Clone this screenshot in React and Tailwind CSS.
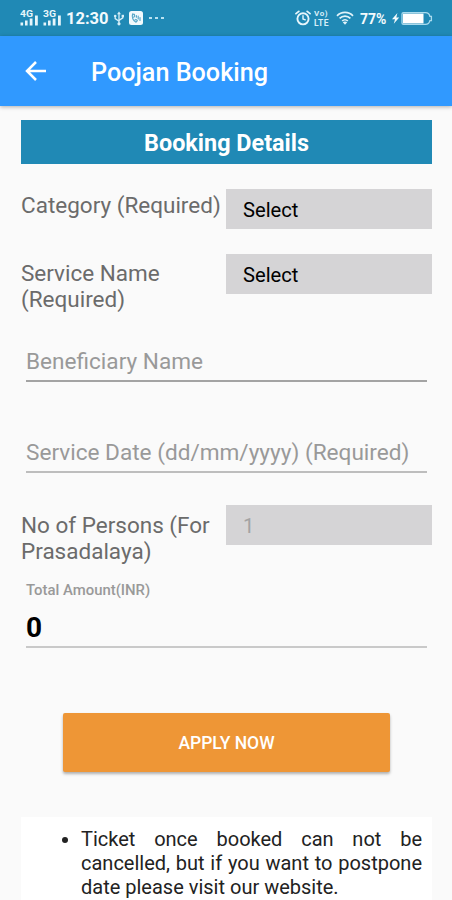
import React, { useState } from "react";

const SignalIcon = ({ label }) => (
  <svg width="20" height="18" viewBox="0 0 20 18" fill="#e6f5fb">
    <text
      x="0"
      y="8"
      fontSize="9.5"
      fontWeight="700"
      fontFamily="Roboto, sans-serif"
      textLength="13"
      lengthAdjust="spacingAndGlyphs"
    >
      {label}
    </text>
    <rect x="0.5" y="13.5" width="2.6" height="3" />
    <rect x="5" y="11.5" width="2.6" height="5" />
    <rect x="9.7" y="9.5" width="2.8" height="7" />
    <rect x="15" y="6.5" width="2.8" height="10" />
  </svg>
);

const UsbIcon = () => (
  <svg width="12" height="15" viewBox="0 0 12 15" fill="none" stroke="#d5eef8" strokeWidth="1.3">
    <path d="M6 2.5V12" />
    <path d="M2.2 5.5V7.6L6 10.2" />
    <path d="M9.8 5.5V6.8L6 9.4" />
    <path d="M6 0.4L8 3.2H4Z" fill="#d5eef8" stroke="none" />
    <circle cx="2.2" cy="5" r="1.3" fill="#d5eef8" stroke="none" />
    <rect x="8.6" y="3.8" width="2.4" height="2.4" fill="#d5eef8" stroke="none" />
    <circle cx="6" cy="12.8" r="1.6" fill="#d5eef8" stroke="none" />
  </svg>
);

const CallAppIcon = () => (
  <svg width="14" height="14" viewBox="0 0 14 14">
    <rect width="14" height="14" rx="2.5" fill="#f2fafd" />
    <g fill="none" stroke="#5ba9c9" strokeWidth="1.2" strokeLinecap="round" strokeLinejoin="round">
      <path d="M3.6 3.2C2.6 6 4 9.6 7 11.2L8.4 9.6L6.9 8.4L6 9" />
      <path d="M3.6 3.2L5.4 3.4L5.6 5.4L4.6 6.2" />
      <path d="M7.4 6.2V4.6M9.2 8V5.2M11 9.4V6.6" />
    </g>
  </svg>
);

const AlarmIcon = () => (
  <svg width="16" height="16" viewBox="0 0 16 16" fill="none" stroke="#e6f5fb" strokeLinecap="round">
    <circle cx="8" cy="8.8" r="5.6" strokeWidth="1.9" />
    <path d="M1 3.6L3.8 1.4M15 3.6L12.2 1.4" strokeWidth="1.8" />
    <path d="M8 5.8V9L10.3 9.8" strokeWidth="1.4" />
  </svg>
);

const VolteIcon = () => (
  <div className="w-[17px] flex flex-col text-[#d5eef8] font-bold">
    <span className="text-[8px] leading-[9px] tracking-[0.6px]">Vo)</span>
    <span className="text-[8.5px] leading-[10px] tracking-[0.4px]">LTE</span>
  </div>
);

const WifiIcon = () => (
  <svg width="18" height="14" viewBox="0 0 18 14" fill="none" stroke="#e0f2f9" strokeWidth="1.7">
    <path d="M1 4.8C5.4 0.2 12.6 0.2 17 4.8" />
    <path d="M3.6 7.4C6.6 4.3 11.4 4.3 14.4 7.4" />
    <path d="M6.2 10C7.8 8.3 10.2 8.3 11.8 10" />
    <path d="M9 13.8L6.8 11.2C8 10.2 10 10.2 11.2 11.2Z" fill="#e0f2f9" stroke="none" />
  </svg>
);

const BatteryIcon = () => (
  <svg width="41" height="15" viewBox="0 0 41 15">
    <path d="M5.4 2L0 8.2H3L1.8 12.8L7.2 6.6H4.3Z" fill="#f2fafd" />
    <path
      d="M11.5 1.6H33.5C36 1.6 37.5 3.6 37.9 5.3H39.4V9.7H37.9C37.5 11.4 36 13.4 33.5 13.4H11.5C10.4 13.4 10 12.8 10 12V3C10 2.2 10.4 1.6 11.5 1.6Z"
      fill="none"
      stroke="#a9dbee"
      strokeWidth="1.3"
    />
    <rect x="11" y="2.6" width="20.5" height="9.8" fill="#ffffff" />
  </svg>
);

const StatusBar = () => (
  <div className="h-9 shrink-0 bg-[#2089b5] flex items-center justify-between pl-5 pr-[19px] text-[#f2fafd]">
    <div className="flex items-center">
      <div className="flex gap-[3px]">
        <SignalIcon label="4G" />
        <SignalIcon label="3G" />
      </div>
      <span className="ml-[3px] w-[47px] text-[16.5px] font-bold leading-none pt-[3px]">12:30</span>
      <UsbIcon />
      <div className="ml-1 mr-[6px]">
        <CallAppIcon />
      </div>
      <div className="flex gap-[3px]">
        {[0, 1, 2].map((i) => (
          <span key={i} className="w-[3px] h-[2px] bg-[#b9e2f1]" />
        ))}
      </div>
    </div>
    <div className="flex items-center">
      <AlarmIcon />
      <div className="ml-[3px] mr-[5px]">
        <VolteIcon />
      </div>
      <WifiIcon />
      <span className="ml-[6px] w-[32px] text-[14px] font-bold leading-none pt-px">77%</span>
      <BatteryIcon />
    </div>
  </div>
);

const AppBar = () => (
  <header className="h-[70px] shrink-0 bg-[#3099ff] flex items-center pl-[25px] text-white shadow-[0_1px_4px_rgba(0,0,0,0.3)]">
    <button className="w-[66px]">
      <svg width="22" height="20" viewBox="0 0 22 20" fill="none" stroke="white" strokeWidth="2.5">
        <path d="M21 10H2.5M11 1L2 10L11 19" />
      </svg>
    </button>
    <h1 className="text-[25.2px] font-medium leading-none pt-[3px]">Poojan Booking</h1>
  </header>
);

// label on the left, grey box on the right
const BoxRow = ({ label, value, disabled, className, labelClass }) => (
  <div className={`flex justify-between ${className}`}>
    <p className={`w-[204px] text-[22.5px] leading-[26px] text-[#6b6b6b] whitespace-pre-line ${labelClass}`}>
      {label}
    </p>
    <button
      disabled={disabled}
      className={`w-[206px] h-[39.5px] shrink-0 bg-[#d5d4d6] pl-[17px] pt-[2px] text-left text-[20.2px] leading-none ${
        disabled ? "text-[#a3a3a3]" : "text-black"
      }`}
    >
      {value}
    </button>
  </div>
);

const LineInput = ({ placeholder, className }) => {
  const [value, setValue] = useState("");

  return (
    <input
      value={value}
      placeholder={placeholder}
      onChange={(e) => setValue(e.target.value)}
      className={`block w-[401px] mx-[5px] h-[42px] pt-[3px] border-b-2 text-[22.6px] text-black placeholder:text-[#999999] outline-none ${className}`}
    />
  );
};

const App = () => {
  return (
    <div className="w-[452px] h-[900px] overflow-hidden bg-[#fafafa] font-['Roboto',sans-serif] flex flex-col">
      <StatusBar />
      <AppBar />

      <main className="flex-1 pl-[21px] pr-5 pt-[14px]">
        <h2 className="h-11 bg-[#2089b5] flex items-center justify-center pt-[3px] text-[23.4px] font-bold leading-none text-white">
          Booking Details
        </h2>

        {/* FORM */}
        <BoxRow label="Category (Required)" value="Select" className="mt-[25px] h-[65px]" labelClass="pt-[3px]" />
        <BoxRow label={"Service Name\n(Required)"} value="Select" className="h-[86px]" labelClass="pt-[6px]" />
        <LineInput placeholder="Beneficiary Name" className="border-[#a3a3a3]" />
        <LineInput placeholder="Service Date (dd/mm/yyyy) (Required)" className="mt-[49px] border-[#bdbdbd]" />
        <BoxRow
          label={"No of Persons (For\nPrasadalaya)"}
          value="1"
          disabled
          className="mt-8 h-[76px]"
          labelClass="pt-[7px]"
        />

        <div className="mx-[5px] w-[401px] h-[67px] border-b-2 border-[#c9c9c9]">
          <p className="text-[14.9px] font-medium leading-[18px] text-[#999999]">Total Amount(INR)</p>
          <p className="mt-[11px] text-[28px] leading-9 font-bold text-black">0</p>
        </div>

        <button className="block ml-[42px] mt-[65px] w-[327px] h-[59px] rounded-[2px] bg-[#ee9636] text-white text-[17.5px] font-medium pt-[2px] shadow-[0_2px_3px_rgba(0,0,0,0.3)]">
          APPLY NOW
        </button>

        {/* NOTES */}
        <div className="mt-[45px] bg-white pt-[10px] pb-3 pl-[60px] pr-[10px]">
          <ul className="list-disc text-[20px] leading-6 text-[#222222] text-justify">
            <li>
              Ticket once booked can not be cancelled, but if you want to postpone date please visit our website.
            </li>
          </ul>
        </div>
      </main>
    </div>
  );
};

export default App;
